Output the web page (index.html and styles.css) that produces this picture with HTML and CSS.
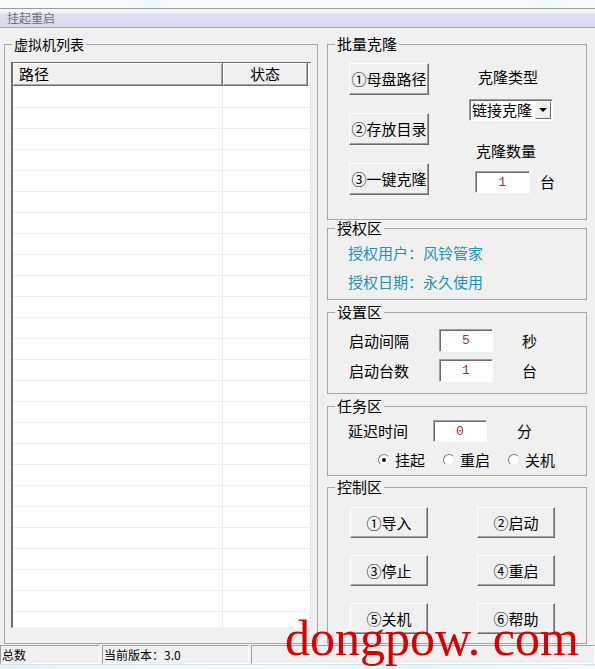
FILE: index.html
```html
<!DOCTYPE html>
<html lang="zh-CN">
<head>
<meta charset="utf-8">
<title>挂起重启</title>
<link rel="stylesheet" href="styles.css">
</head>
<body>
<div class="titlebar"></div>
<div class="menubar"><span class="menu-item">挂起重启</span></div>

<div class="main">
  <fieldset class="group group-list">
    <legend class="caption caption-list">虚拟机列表</legend>
    <div class="listview">
      <div class="lv-header">
        <div class="lv-col col-path">路径</div>
        <div class="lv-col col-status">状态</div>
      </div>
      <div class="lv-body">
        <div class="lv-row"><div class="lv-cell c1"></div><div class="lv-cell c2"></div></div>
        <div class="lv-row"><div class="lv-cell c1"></div><div class="lv-cell c2"></div></div>
        <div class="lv-row"><div class="lv-cell c1"></div><div class="lv-cell c2"></div></div>
        <div class="lv-row"><div class="lv-cell c1"></div><div class="lv-cell c2"></div></div>
        <div class="lv-row"><div class="lv-cell c1"></div><div class="lv-cell c2"></div></div>
        <div class="lv-row"><div class="lv-cell c1"></div><div class="lv-cell c2"></div></div>
        <div class="lv-row"><div class="lv-cell c1"></div><div class="lv-cell c2"></div></div>
        <div class="lv-row"><div class="lv-cell c1"></div><div class="lv-cell c2"></div></div>
        <div class="lv-row"><div class="lv-cell c1"></div><div class="lv-cell c2"></div></div>
        <div class="lv-row"><div class="lv-cell c1"></div><div class="lv-cell c2"></div></div>
        <div class="lv-row"><div class="lv-cell c1"></div><div class="lv-cell c2"></div></div>
        <div class="lv-row"><div class="lv-cell c1"></div><div class="lv-cell c2"></div></div>
        <div class="lv-row"><div class="lv-cell c1"></div><div class="lv-cell c2"></div></div>
        <div class="lv-row"><div class="lv-cell c1"></div><div class="lv-cell c2"></div></div>
        <div class="lv-row"><div class="lv-cell c1"></div><div class="lv-cell c2"></div></div>
        <div class="lv-row"><div class="lv-cell c1"></div><div class="lv-cell c2"></div></div>
        <div class="lv-row"><div class="lv-cell c1"></div><div class="lv-cell c2"></div></div>
        <div class="lv-row"><div class="lv-cell c1"></div><div class="lv-cell c2"></div></div>
        <div class="lv-row"><div class="lv-cell c1"></div><div class="lv-cell c2"></div></div>
        <div class="lv-row"><div class="lv-cell c1"></div><div class="lv-cell c2"></div></div>
        <div class="lv-row"><div class="lv-cell c1"></div><div class="lv-cell c2"></div></div>
        <div class="lv-row"><div class="lv-cell c1"></div><div class="lv-cell c2"></div></div>
        <div class="lv-row"><div class="lv-cell c1"></div><div class="lv-cell c2"></div></div>
        <div class="lv-row"><div class="lv-cell c1"></div><div class="lv-cell c2"></div></div>
        <div class="lv-row"><div class="lv-cell c1"></div><div class="lv-cell c2"></div></div>
        <div class="lv-row"><div class="lv-cell c1"></div><div class="lv-cell c2"></div></div>
      </div>
    </div>
  </fieldset>

  <div class="side">
    <fieldset class="group g-clone">
      <legend class="caption">批量克隆</legend>
      <div class="clone-body">
        <div class="clone-buttons">
          <div class="btn btn-wide">①母盘路径</div>
          <div class="btn btn-wide">②存放目录</div>
          <div class="btn btn-wide">③一键克隆</div>
        </div>
        <div class="clone-options">
          <div class="label label-type">克隆类型</div>
          <div class="combo">
            <span class="combo-text">链接克隆</span>
            <span class="combo-btn"></span>
          </div>
          <div class="label label-count">克隆数量</div>
          <div class="num-row">
            <div class="field field-count">1</div>
            <span class="unit unit-count">台</span>
          </div>
        </div>
      </div>
    </fieldset>

    <fieldset class="group g-auth">
      <legend class="caption">授权区</legend>
      <div class="auth-body">
        <div class="auth-line">授权用户：风铃管家</div>
        <div class="auth-line">授权日期：永久使用</div>
      </div>
    </fieldset>

    <fieldset class="group g-set">
      <legend class="caption">设置区</legend>
      <div class="set-body">
        <div class="set-row">
          <span class="set-label">启动间隔</span>
          <div class="field field-set">5</div>
          <span class="unit unit-set">秒</span>
        </div>
        <div class="set-row">
          <span class="set-label">启动台数</span>
          <div class="field field-set">1</div>
          <span class="unit unit-set">台</span>
        </div>
      </div>
    </fieldset>

    <fieldset class="group g-task">
      <legend class="caption">任务区</legend>
      <div class="task-body">
        <div class="task-row">
          <span class="task-label">延迟时间</span>
          <div class="field field-set">0</div>
          <span class="unit unit-task">分</span>
        </div>
        <div class="radio-row">
          <span class="radio"><span class="radio-dot checked"></span>挂起</span>
          <span class="radio"><span class="radio-dot"></span>重启</span>
          <span class="radio"><span class="radio-dot"></span>关机</span>
        </div>
      </div>
    </fieldset>

    <fieldset class="group g-ctrl">
      <legend class="caption">控制区</legend>
      <div class="ctrl-body">
        <div class="btn btn-ctrl">①导入</div>
        <div class="btn btn-ctrl">②启动</div>
        <div class="btn btn-ctrl">③停止</div>
        <div class="btn btn-ctrl">④重启</div>
        <div class="btn btn-ctrl">⑤关机</div>
        <div class="btn btn-ctrl">⑥帮助</div>
      </div>
    </fieldset>
  </div>
</div>

<div class="statusbar">
  <div class="panel p1">总数</div>
  <div class="panel p2">当前版本：3.0</div>
  <div class="panel p3"></div>
</div>
<div class="footer"></div>

<div class="watermark">dongpow. com</div>
</body>
</html>
```

FILE: styles.css
```css
* { box-sizing: border-box; }

html, body { margin: 0; padding: 0; }

body {
  position: relative;
  width: 595px;
  height: 669px;
  overflow: hidden;
  background: #f0f0f0;
  color: #000;
  font-family: "Noto Sans CJK SC", "Noto Sans", sans-serif;
  font-size: 15px;
  line-height: 16px;
}

.titlebar {
  height: 9px;
  background: linear-gradient(90deg, #f8fafb 0, #f8fafb 20%, #eefafa 25%, #f8fafb 30%, #f8fafb 88%, #eefbf8 92%, #f8fafb 96%);
  border-bottom: 1px solid #9c9c9c;
}

.menubar {
  height: 19px;
  padding-left: 7px;
  background: linear-gradient(#f6f7fc 0, #f3f4fb 3px, #dfe2f2 5px, #d6daee 100%);
  border-bottom: 1px solid #a8a8a8;
  color: #707070;
  font-size: 12px;
  line-height: 18px;
}

.main {
  display: flex;
  height: 616px;
  padding: 8px 0 0 4px;
}

/* group boxes */
.group {
  margin: 0;
  padding: 0;
  min-width: 0;
  border: 1px solid #a6a6a6;
}

.caption {
  margin-left: 7px;
  padding: 0 2px;
  font-size: 15px;
  line-height: 16px;
}

.caption-list { font-size: 14px; }

.group-list {
  width: 314px;
  height: 608px;
}

/* list view */
.listview {
  width: 300px;
  height: 566px;
  margin: 10px 0 0 6px;
  overflow: hidden;
  background: #fff;
  border-style: solid;
  border-width: 1px 1px 1px 2px;
  border-color: #6d6d6d #e4e4e4 #f4f4f4 #6d6d6d;
}

.lv-header {
  display: flex;
  height: 23px;
}

.lv-col {
  height: 23px;
  background: #f0f0f0;
  border-right: 1px solid #6d6d6d;
  border-bottom: 1px solid #6d6d6d;
  box-shadow: inset 1px 1px 0 #fff, inset -1px -1px 0 #a8a8a8;
  font-size: 15px;
  line-height: 21px;
}

.col-path { width: 210px; padding-left: 6px; }
.col-status { width: 85px; text-align: center; }

.lv-row {
  display: flex;
  height: 21px;
  border-bottom: 1px solid #ededed;
}

.lv-row:first-child { height: 22px; }

.lv-cell { height: 100%; }
.c1 { width: 210px; border-right: 1px solid #ededed; }
.c2 { width: 85px; }

/* side column */
.side {
  display: flex;
  flex-direction: column;
  width: 260px;
  margin-left: 9px;
}

.g-clone { height: 184px; }
.g-auth { height: 80px; }
.g-set { height: 90px; margin-top: 4px; }
.g-task { height: 78px; margin-top: 4px; }
.g-ctrl { height: 165px; margin-top: 3px; }

/* buttons */
.btn {
  display: flex;
  align-items: center;
  justify-content: center;
  background: #f0f0f0;
  border: 1px solid;
  border-color: #fff #6a6a6a #6a6a6a #fff;
  box-shadow: inset -1px -1px 0 #a0a0a0;
  font-size: 15px;
  line-height: 16px;
  white-space: nowrap;
}

.btn-wide { width: 80px; height: 32px; }
.btn-ctrl { width: 78px; height: 31px; }

/* clone group */
.clone-body {
  display: flex;
  padding-left: 21px;
}

.clone-buttons {
  display: flex;
  flex-direction: column;
  gap: 18px;
  padding-top: 11px;
}

.clone-options {
  display: flex;
  flex-direction: column;
  align-items: flex-start;
  margin-left: 40px;
}

.label-type { margin: 17px 0 0 9px; }
.label-count { margin: 22px 0 0 7px; }

.combo {
  display: flex;
  align-items: center;
  width: 84px;
  height: 22px;
  margin-top: 14px;
  padding: 1px 1px 1px 2px;
  background: #fff;
  border: 1px solid;
  border-color: #a0a0a0 #fff #fff #a0a0a0;
  box-shadow: inset 1px 1px 0 #6d6d6d;
}

.combo-text {
  flex: 1;
  font-size: 15px;
  line-height: 18px;
  white-space: nowrap;
}

.combo-btn {
  display: flex;
  align-items: center;
  justify-content: center;
  width: 16px;
  height: 18px;
  background: #f0f0f0;
  border: 1px solid;
  border-color: #f6f6f6 #6a6a6a #6a6a6a #f6f6f6;
}

.combo-btn::after {
  content: "";
  width: 0;
  height: 0;
  border-left: 4px solid transparent;
  border-right: 4px solid transparent;
  border-top: 4px solid #000;
}

.num-row {
  display: flex;
  align-items: center;
  margin: 12px 0 0 6px;
}

.unit-count { margin-left: 10px; }

/* text fields */
.field {
  height: 22px;
  background: #fff;
  border: 1px solid;
  border-color: #a0a0a0 #fff #fff #a0a0a0;
  box-shadow: inset 1px 1px 0 #6d6d6d;
  color: #a83030;
  font-family: "Liberation Mono", "DejaVu Sans Mono", monospace;
  font-size: 13px;
  line-height: 21px;
  text-align: center;
}

.field-count { width: 55px; }
.field-set { width: 54px; }

/* auth group */
.auth-body {
  display: flex;
  flex-direction: column;
  gap: 13px;
  padding: 9px 0 0 20px;
  color: #2590b6;
}

/* settings group */
.set-body {
  display: flex;
  flex-direction: column;
  gap: 7px;
  padding: 9px 0 0 21px;
}

.set-row {
  display: flex;
  align-items: center;
  height: 23px;
}

.set-row .field { height: 23px; }

.set-label { width: 90px; }
.unit-set { margin-left: 29px; }

/* task group */
.task-body {
  padding: 6px 0 0 20px;
}

.task-row {
  display: flex;
  align-items: center;
  height: 22px;
}

.task-label { width: 85px; }
.unit-task { margin-left: 30px; }

.radio-row {
  display: flex;
  gap: 18px;
  margin: 10px 0 0 30px;
}

.radio {
  display: flex;
  align-items: center;
  gap: 5px;
}

.radio-dot {
  position: relative;
  width: 12px;
  height: 12px;
  border-radius: 50%;
  background: #fff;
  border: 1px solid;
  border-color: #7d7d7d #e6e6e6 #e6e6e6 #7d7d7d;
}

.radio-dot.checked::after {
  content: "";
  position: absolute;
  left: 3px;
  top: 3px;
  width: 4px;
  height: 4px;
  border-radius: 50%;
  background: #111;
}

/* control group */
.ctrl-body {
  display: grid;
  grid-template-columns: 78px 78px;
  column-gap: 49px;
  row-gap: 17px;
  padding: 12px 0 0 22px;
}

/* status bar */
.statusbar {
  display: flex;
  height: 20px;
  padding-top: 1px;
  font-size: 12px;
}

.panel {
  height: 19px;
  padding-left: 1px;
  border: 1px solid;
  border-color: #a0a0a0 #fff #fff #a0a0a0;
  line-height: 17px;
  white-space: nowrap;
}

.p1 { width: 100px; }
.p2 { width: 147px; margin-left: 2px; }
.p3 { flex: 1; margin-left: 2px; }

.footer {
  height: 5px;
  background: linear-gradient(90deg, #e4f6fa, #f2fbfc 40%, #e6f7fa 70%, #f4fbfc);
  border-top: 1px solid #d0e6ec;
}

/* watermark over the window */
.watermark {
  position: absolute;
  left: 285px;
  top: 613px;
  color: #d80000;
  font-family: "Liberation Serif", serif;
  font-size: 50px;
  line-height: 50px;
  white-space: nowrap;
}
```
